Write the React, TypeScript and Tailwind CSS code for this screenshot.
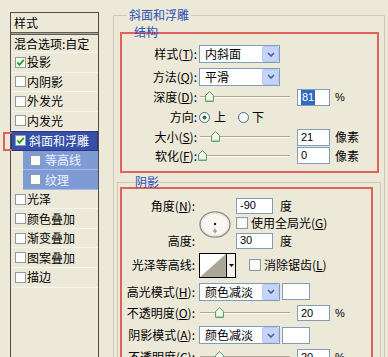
import React from 'react';

const cjk = "font-['Noto_Sans_CJK_SC',sans-serif] text-[12px] leading-none text-black";
const num = "font-['Liberation_Sans',sans-serif] text-[11px] leading-none text-black";

const styles = [
  { label: '投影', checked: true },
  { label: '内阴影' },
  { label: '外发光' },
  { label: '内发光' },
  { label: '斜面和浮雕', checked: true, selected: true },
  { label: '等高线', sub: true },
  { label: '纹理', sub: true },
  { label: '光泽' },
  { label: '颜色叠加' },
  { label: '渐变叠加' },
  { label: '图案叠加' },
  { label: '描边' },
];

function CheckBox({ checked = false, size = 11 }: { checked?: boolean; size?: number }) {
  return (
    <svg width={size} height={size} viewBox="0 0 11 11" className="shrink-0">
      <rect x="0.5" y="0.5" width="10" height="10" fill="#fbfbf8" stroke="#8e9aa8" />
      {checked && <path d="M2.3 5.4 L4.4 7.8 L8.8 2.8" stroke="#21a121" strokeWidth="1.8" fill="none" />}
    </svg>
  );
}

function Radio({ checked = false }: { checked?: boolean }) {
  return (
    <svg width="11" height="11" viewBox="0 0 11 11" className="shrink-0">
      <circle cx="5.5" cy="5.5" r="5" fill="#fbfbf8" stroke="#4a6a94" />
      {checked && <circle cx="5.5" cy="5.5" r="2" fill="#2a7d2a" />}
    </svg>
  );
}

function Thumb() {
  return (
    <svg width="9" height="11" viewBox="0 0 9 11">
      <path d="M4.5 0.6 L8.4 4.4 V10.4 H0.6 V4.4 Z" fill="#f6f6ef" stroke="#4f9a5a" />
      <path d="M1.4 9.4 H7.6" stroke="#9fd0a6" />
    </svg>
  );
}

function Slider({ at }: { at: number }) {
  return (
    <div className="relative h-[12px] w-[92px] shrink-0">
      <div className="absolute left-[2px] right-0 top-[5px] h-[2px] border-t border-[#a9a799] border-b border-b-white" />
      <div className="absolute top-0" style={{ left: at - 4.5 }}>
        <Thumb />
      </div>
    </div>
  );
}

function Select({ value }: { value: string }) {
  return (
    <div className="flex h-[18px] w-[81px] shrink-0 items-center border border-[#7f9db9] bg-white pl-[5px]">
      <span className={`${cjk} flex-1`}>{value}</span>
      <span className="flex h-[16px] w-[17px] items-center justify-center rounded-[2px] border border-[#b7c8f2] bg-[#c4d4fb]">
        <svg width="8" height="5" viewBox="0 0 8 5">
          <path d="M1 1 L4 4 L7 1" stroke="#4d6185" strokeWidth="1.6" fill="none" />
        </svg>
      </span>
    </div>
  );
}

function Field({ value, w = 33, h = 17, selected = false }: { value: string; w?: number; h?: number; selected?: boolean }) {
  return (
    <div
      className="flex shrink-0 items-center border border-[#7f9db9] bg-white pl-[3px]"
      style={{ width: w, height: h }}
    >
      <span className={`${num} ${selected ? 'bg-[#316ac5] px-[1px] py-[2px] text-white' : ''}`}>{value}</span>
    </div>
  );
}

function Label({ w, children }: { w: number; children: React.ReactNode }) {
  return (
    <div className={`${cjk} shrink-0 text-right`} style={{ width: w }}>
      {children}
    </div>
  );
}

function Dial() {
  return (
    <svg width="32" height="27" viewBox="0 0 32 27" className="shrink-0">
      <ellipse cx="16" cy="13.5" rx="15" ry="12.6" fill="#f8f7f2" stroke="#8b8a84" strokeWidth="1.3" />
      <ellipse cx="16" cy="13.5" rx="13.6" ry="11.2" fill="none" stroke="#e2e0d6" />
      <circle cx="16" cy="13" r="1.2" fill="#222" />
      <path d="M16 17.5 V22.5 M14 20 H18" stroke="#777" strokeWidth="0.9" />
    </svg>
  );
}

export default function App() {
  return (
    <div className="flex h-[357px] w-[388px] overflow-hidden bg-[#ece9d8]">
      {/* style list */}
      <div className="relative w-[113px] shrink-0">
        <div className="absolute left-[3px] top-[132px] h-[19px] w-[9px] border-2 border-r-0 border-[#e0625d]" />
        <div className="ml-[10px] mt-[12px] h-[360px] w-[89px] border border-b-0 border-[#4f4e4a]">
          <div className={`${cjk} flex h-[19px] items-center pl-[3px]`}>样式</div>
          <div className="h-[3px] border-y border-[#5d5c57] bg-[#a8a699]" />
          <div className={`${cjk} flex h-[18px] items-center border-b border-[#f6f4ec] pl-[3px]`}>混合选项:自定</div>
          {styles.map((s) =>
            s.selected ? (
              <div
                key={s.label}
                className="flex h-[19.55px] items-center gap-[3px] border border-[#3a2f78] bg-[#3550a9] pl-[3px]"
              >
                <CheckBox checked />
                <span className={`${cjk} !text-white`}>{s.label}</span>
              </div>
            ) : s.sub ? (
              <div key={s.label} className="flex h-[19.55px] pl-[12px]">
                <div className="flex flex-1 items-center gap-[4px] border-b border-[#a9bbe4] bg-[#7f9bd6] pl-[7px]">
                  <CheckBox />
                  <span className={`${cjk} !text-[#eef2ff]`}>{s.label}</span>
                </div>
              </div>
            ) : (
              <div key={s.label} className="flex h-[19.55px] items-center gap-[1px] border-b border-[#f6f4ec] pl-[4px]">
                <CheckBox checked={s.checked} />
                <span className={cjk}>{s.label}</span>
              </div>
            )
          )}
        </div>
      </div>

      {/* bevel & emboss */}
      <div className="relative mt-[15px] h-[360px] w-[272px] shrink-0 border border-b-0 border-[#cdcabb]">
        <span className={`${cjk} absolute -top-[7px] left-[13px] bg-[#ece9d8] px-[2px] !text-[#2b50b6]`}>斜面和浮雕</span>

        {/* structure */}
        <div className="relative ml-[6px] mt-[16px] h-[141px] w-[259px] border-2 border-[#e0625d] pt-[9px]">
          <span className={`${cjk} absolute -top-[8px] left-[12px] !text-[#2b50b6]`}>结构</span>
          <div className="flex h-[22px] items-center">
            <Label w={75}>样式(<u>T</u>):</Label>
            <div className="ml-[2px]"><Select value="内斜面" /></div>
          </div>
          <div className="flex h-[23px] items-center">
            <Label w={75}>方法(<u>Q</u>):</Label>
            <div className="ml-[2px]"><Select value="平滑" /></div>
          </div>
          <div className="flex h-[18px] items-center">
            <Label w={75}>深度(<u>D</u>):</Label>
            <div className="ml-[1px]"><Slider at={11} /></div>
            <div className="ml-[7px]"><Field value="81" selected /></div>
            <span className={`${num} ml-[5px]`}>%</span>
          </div>
          <div className="flex h-[22px] items-center">
            <Label w={75}>方向:</Label>
            <div className="ml-[2px] flex items-center">
              <Radio checked />
              <span className={`${cjk} ml-[4px]`}>上</span>
              <span className="ml-[12px]"><Radio /></span>
              <span className={`${cjk} ml-[3px]`}>下</span>
            </div>
          </div>
          <div className="flex h-[18px] items-center">
            <Label w={75}>大小(<u>S</u>):</Label>
            <div className="ml-[1px]"><Slider at={17} /></div>
            <div className="ml-[7px]"><Field value="21" /></div>
            <span className={`${cjk} ml-[5px]`}>像素</span>
          </div>
          <div className="flex h-[19px] items-center">
            <Label w={75}>软化(<u>F</u>):</Label>
            <div className="ml-[1px]"><Slider at={4} /></div>
            <div className="ml-[7px]"><Field value="0" /></div>
            <span className={`${cjk} ml-[5px]`}>像素</span>
          </div>
        </div>

        {/* shading */}
        <div className="relative ml-[3px] mt-[9px] h-[200px] w-[264px] border border-b-0 border-[#cdcabb]">
          <span className={`${cjk} absolute -top-[7px] left-[17px] !text-[#2b50b6]`}>阴影</span>
          <div className="ml-[2px] mt-[4px] h-[200px] w-[253px] border-2 border-b-0 border-[#e0625d] pt-[8px]">
            <div className="flex h-[52px]">
              <div className="flex w-[73px] shrink-0 flex-col">
                <div className="flex h-[17px] items-center justify-end"><Label w={73}>角度(<u>N</u>):</Label></div>
                <div className="h-[18px]" />
                <div className="flex h-[17px] items-center justify-end"><Label w={73}>高度:</Label></div>
              </div>
              <div className="ml-[4px] mt-[14px]"><Dial /></div>
              <div className="ml-[5px] flex flex-col">
                <div className="flex h-[17px] items-center">
                  <Field value="-90" w={37} h={16} />
                  <span className={`${cjk} ml-[7px]`}>度</span>
                </div>
                <div className="flex h-[18px] items-center">
                  <CheckBox size={12} />
                  <span className={`${cjk} ml-[3px]`}>使用全局光(<u>G</u>)</span>
                </div>
                <div className="flex h-[17px] items-center">
                  <Field value="30" w={37} h={16} />
                  <span className={`${cjk} ml-[7px]`}>度</span>
                </div>
              </div>
            </div>
            <div className="flex h-[32px] items-center">
              <Label w={73}>光泽等高线:</Label>
              <div className="ml-[4px] flex">
                <svg width="28" height="25" viewBox="0 0 28 25" className="border border-black">
                  <rect width="28" height="25" fill="#fff" />
                  <polygon points="0,25 28,0 28,25" fill="#aaa698" />
                </svg>
                <div className="flex h-[25px] w-[9px] items-center justify-center border border-l-0 border-black bg-[#f4f3ee]">
                  <svg width="5" height="3" viewBox="0 0 5 3"><polygon points="0,0 5,0 2.5,3" fill="#000" /></svg>
                </div>
              </div>
              <div className="ml-[13px] flex items-center">
                <CheckBox size={12} />
                <span className={`${cjk} ml-[3px]`}>消除锯齿(<u>L</u>)</span>
              </div>
            </div>
            <div className="flex h-[21px] items-center">
              <Label w={73}>高光模式(<u>H</u>):</Label>
              <div className="ml-[4px]"><Select value="颜色减淡" /></div>
              <div className="ml-[2px] h-[17px] w-[28px] border border-[#7f9db9] bg-white" />
            </div>
            <div className="flex h-[22px] items-center">
              <Label w={73}>不透明度(<u>O</u>):</Label>
              <div className="ml-[3px]"><Slider at={21} /></div>
              <div className="ml-[7px]"><Field value="20" h={16} /></div>
              <span className={`${num} ml-[5px]`}>%</span>
            </div>
            <div className="flex h-[22px] items-center">
              <Label w={73}>阴影模式(<u>A</u>):</Label>
              <div className="ml-[4px]"><Select value="颜色减淡" /></div>
              <div className="ml-[2px] h-[17px] w-[28px] border border-[#7f9db9] bg-white" />
            </div>
            <div className="flex h-[22px] items-center">
              <Label w={73}>不透明度(<u>C</u>):</Label>
              <div className="ml-[3px]"><Slider at={21} /></div>
              <div className="ml-[7px]"><Field value="20" h={16} /></div>
              <span className={`${num} ml-[5px]`}>%</span>
            </div>
          </div>
        </div>
      </div>
    </div>
  );
}
